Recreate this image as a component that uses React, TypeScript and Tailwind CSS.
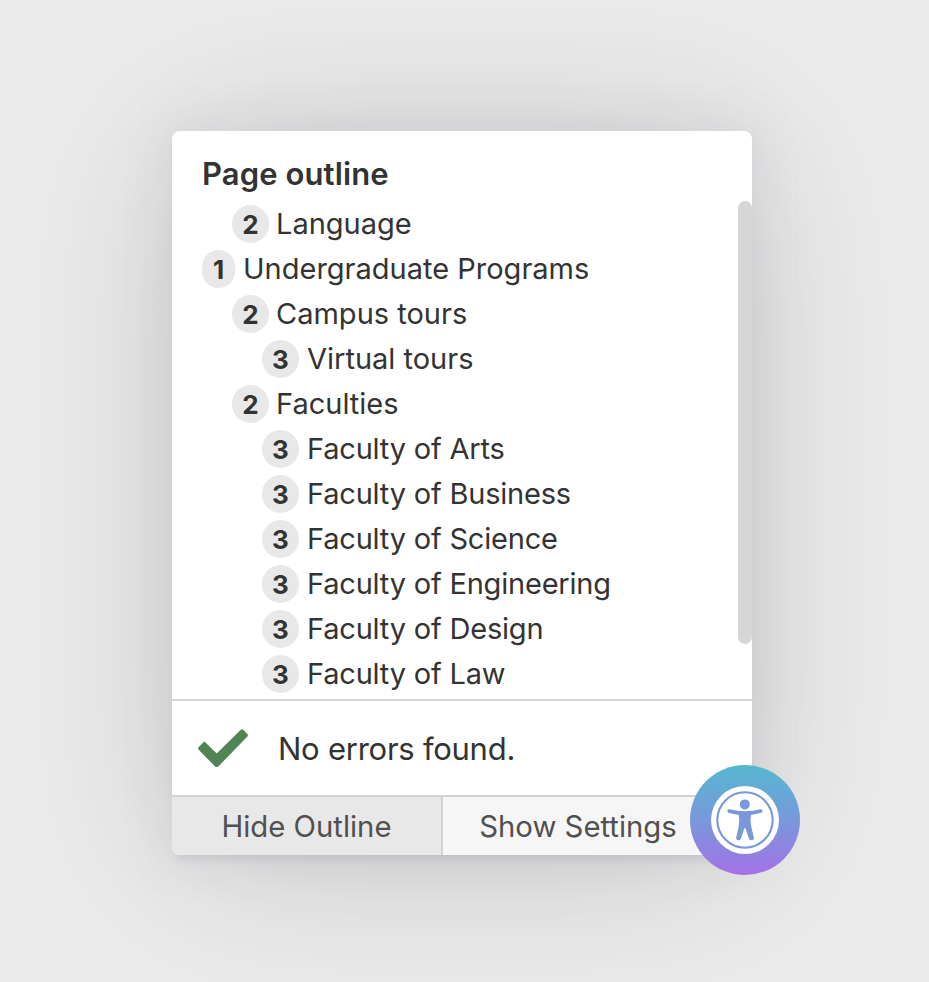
type OutlineItem = { level: 1 | 2 | 3; text: string; tight?: boolean };

const outline: OutlineItem[] = [
  { level: 2, text: "Language" },
  { level: 1, text: "Undergraduate Programs" },
  { level: 2, text: "Campus tours" },
  { level: 3, text: "Virtual tours" },
  { level: 2, text: "Faculties" },
  { level: 3, text: "Faculty of Arts", tight: true },
  { level: 3, text: "Faculty of Business", tight: true },
  { level: 3, text: "Faculty of Science", tight: true },
  { level: 3, text: "Faculty of Engineering", tight: true },
  { level: 3, text: "Faculty of Design", tight: true },
  { level: 3, text: "Faculty of Law", tight: true },
];

const indent = { 1: "pl-0", 2: "pl-[30px]", 3: "pl-[60px]" };
const badge = { 1: "w-[33px] mr-[8px]", 2: "w-[37px] mr-[7px]", 3: "w-[37px] mr-[8px]" };

function OutlineRow({ level, text, tight }: OutlineItem) {
  return (
    <li className={`flex h-[45px] items-center ${indent[level]}`}>
      <span
        className={`flex h-[38px] shrink-0 items-center justify-center rounded-full bg-[#e8e8e8] pt-px text-[26px] font-bold ${badge[level]}`}
      >
        {level}
      </span>
      <span
        className={`pt-px text-[29px] leading-[44px] whitespace-nowrap ${tight ? "tracking-[-0.2px]" : "tracking-normal"}`}
      >
        {text}
      </span>
    </li>
  );
}

function CheckIcon() {
  return (
    <svg className="h-[38px] w-[50px] shrink-0" viewBox="0 0 50 38" fill="#508454">
      <path d="M18.7 38 Q17.6 38 16.8 37.2 L0.7 20.7 Q-0.5 19.3 0.7 18 L5.2 13.4 Q6.3 12.3 7.5 13.4 L18.7 24.4 L42.6 1 Q44 -0.3 45.4 0.9 L49.4 4.9 Q50.6 6.3 49.4 7.6 L20.6 37.2 Q19.8 38 18.7 38 Z" />
    </svg>
  );
}

function AccessibilityToggle() {
  return (
    <button
      aria-label="Check accessibility"
      className="absolute top-[634px] left-[518px] size-[110px] rounded-full"
    >
      <svg viewBox="0 0 110 110" className="size-[110px]">
        <defs>
          <linearGradient id="toggle" gradientUnits="userSpaceOnUse" x1="55" y1="0" x2="55" y2="110">
            <stop offset="0" stopColor="#55b8d0" />
            <stop offset="0.5" stopColor="#7898db" />
            <stop offset="1" stopColor="#a571e6" />
          </linearGradient>
        </defs>
        <circle cx="55" cy="55" r="55" fill="url(#toggle)" />
        <circle cx="55" cy="55" r="34" fill="#fff" />
        <circle cx="55" cy="55" r="27.7" fill="none" stroke="#7898db" strokeWidth="2.1" />
        <g fill="#7898db">
          <circle cx="54.8" cy="39.4" r="5" />
          <path d="M39.4 44.2 Q54.8 48.2 70.4 44.2 A1.9 1.9 0 0 1 71.4 47.8 Q65.8 49.3 61 50 Q60.3 54.5 60.8 59 Q61.4 62.5 63.7 72 A2.4 2.4 0 0 1 59 73.6 Q57.8 70.5 55.8 64.3 Q54.9 61.6 54 64.3 Q52 70.5 51 73.6 A2.4 2.4 0 0 1 46.3 72 Q48.4 63.5 49 59 Q49.5 54.5 48.8 50 Q43.9 49.3 38.4 47.8 A1.9 1.9 0 0 1 39.4 44.2 Z" />
        </g>
      </svg>
    </button>
  );
}

export default function App() {
  return (
    <main className="h-[982px] w-[929px] overflow-hidden bg-[#ebebeb] pt-[131px] pl-[172px] font-['Inter',sans-serif] text-[#333333]">
      <section className="relative h-[724px] w-[580px] rounded-[8px] bg-white shadow-[0_0_40px_8px_rgba(154,158,177,0.15),0_8px_160px_-16px_rgba(36,38,47,0.22),0_8px_8px_-4px_rgba(91,94,105,0.15)]">
        <div className="flex h-full flex-col overflow-hidden rounded-[8px]">
          <h2 className="h-[70px] shrink-0 pt-[19px] pl-[30px] text-[31px] leading-[48px] font-semibold tracking-[0.1px]">
            <span>Page outline</span>
          </h2>
          <div className="flex h-[498px] shrink-0 justify-between">
            <ul className="pl-[30px]">
              {outline.map((item) => (
                <OutlineRow key={item.text} {...item} />
              ))}
            </ul>
            <div className="h-[443px] w-[14px] rounded-full bg-[#d6d6d6]" />
          </div>
          <div className="flex h-[96px] shrink-0 items-center border-t-2 border-[#d6d6d6] pl-[26px]">
            <CheckIcon />
            <p className="pt-px pl-[30px] text-[31px] leading-[48px] tracking-[-0.25px]">
              <span>No errors found.</span>
            </p>
          </div>
          <div className="flex h-[60px] shrink-0 border-t-2 border-[#d3d3d5] text-[29.3px] text-[#505050]">
            <button className="w-[271px] border-r-2 border-[#d3d3d5] bg-[#e8e8e8] pt-px">
              <span>Hide Outline</span>
            </button>
            <button className="flex-1 bg-[#f6f6f6] pt-px pr-[39px]">
              <span className="whitespace-nowrap">Show Settings</span>
            </button>
          </div>
        </div>
        <AccessibilityToggle />
      </section>
    </main>
  );
}
